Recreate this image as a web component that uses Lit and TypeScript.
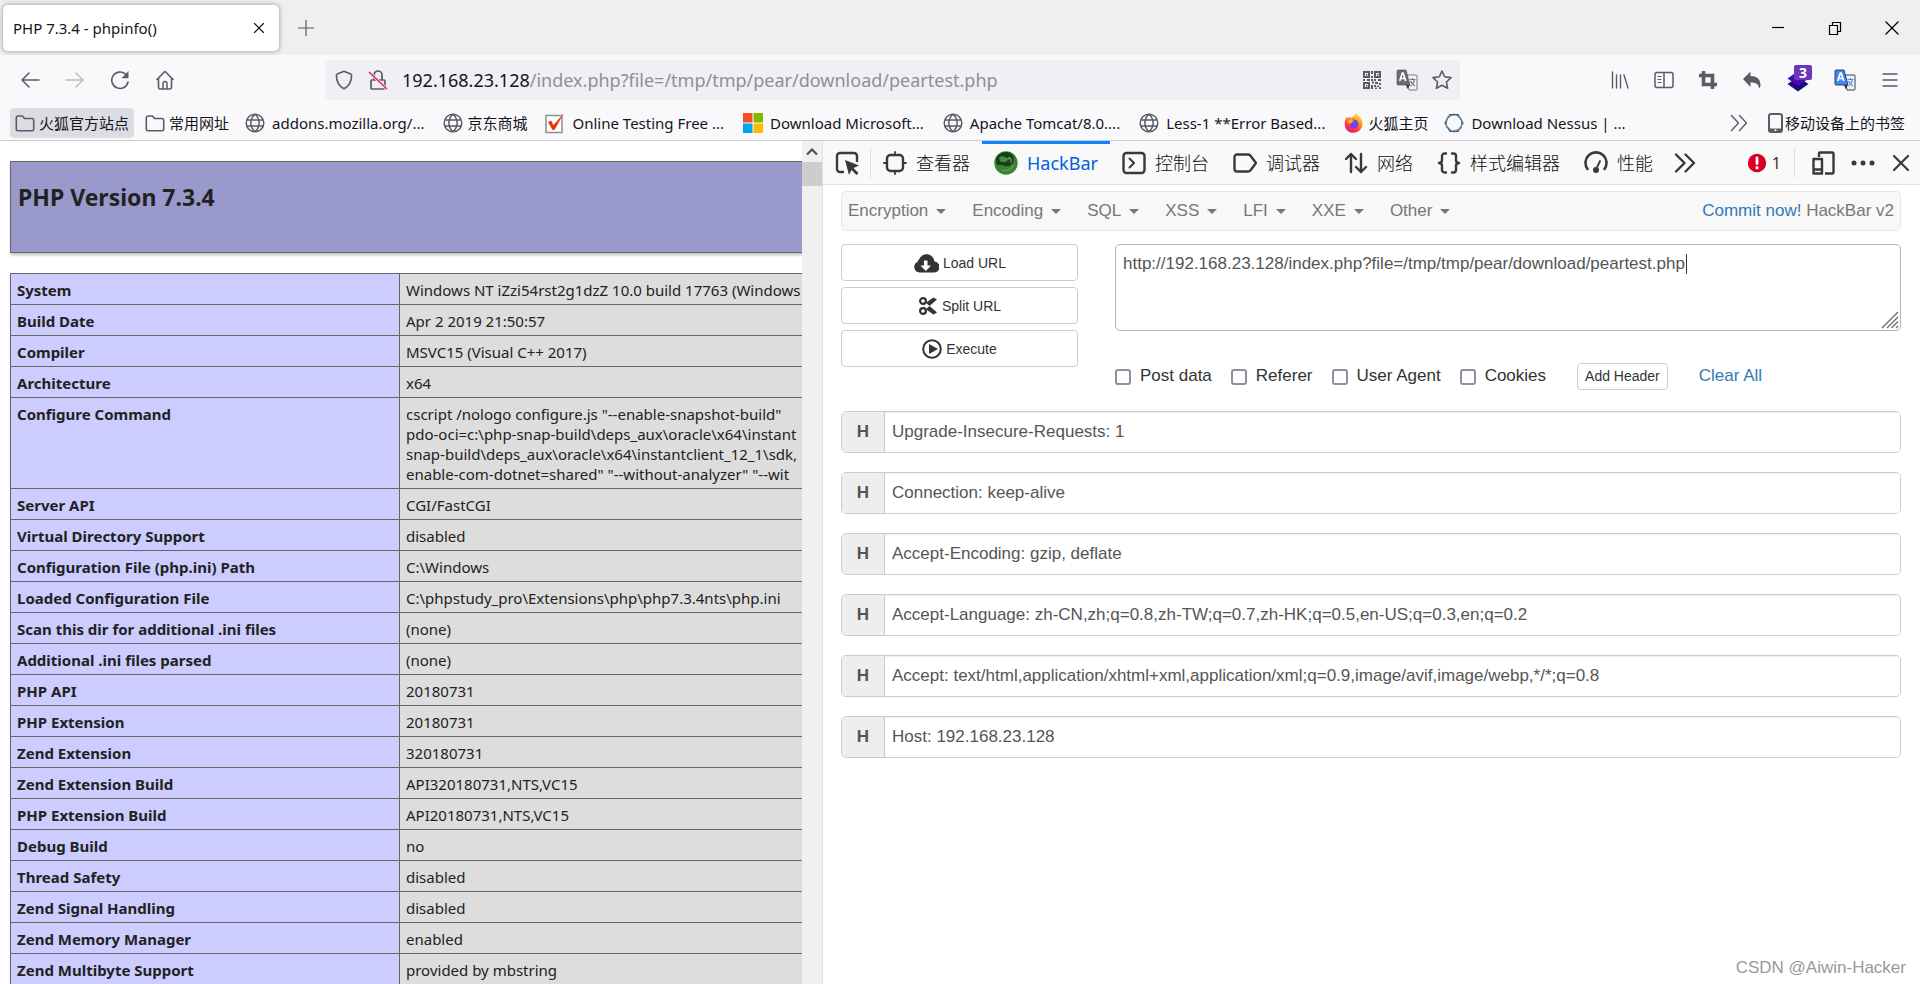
import { LitElement, html, css, svg, TemplateResult } from "lit";
import { customElement } from "lit/decorators.js";
import { classMap } from "lit/directives/class-map.js";

type Glyph = { size: number; body: TemplateResult };

const stroke = (d: string, w = 1.5) =>
  svg`<path d=${d} fill="none" stroke="currentColor" stroke-width=${w} stroke-linecap="round" stroke-linejoin="round"/>`;
const fill = (d: string) => svg`<path d=${d} fill="currentColor" fill-rule="evenodd"/>`;

const glyphs: Record<string, Glyph> = {
  close: { size: 12, body: stroke("M1.500 1.500l9 9M10.500 1.500l-9 9", 1.1) },
  plus: { size: 16, body: stroke("M8 .5v15M.5 8h15", 1.2) },
  minimize: { size: 14, body: svg`<path d="M1 6.500h12" stroke="#000" stroke-width="1.200"/>` },
  restore: { size: 14, body: svg`<path d="M1.500 4.500h8v9h-8zM4.500 4.500v-3h8v9h-3" fill="none" stroke="#000" stroke-width="1.200"/>` },
  winclose: { size: 14, body: svg`<path d="M.5.500l13 13M13.500.500l-13 13" stroke="#000" stroke-width="1.200"/>` },
  back: { size: 20, body: stroke("M19 10H2M9 3l-7 7 7 7") },
  forward: { size: 20, body: stroke("M1 10h17M11 3l7 7-7 7") },
  reload: { size: 20, body: svg`${stroke("M18 12A8.200 8.200 0 1 1 15.500 4.200", 1.6)}${fill("M18.500 1v6.500a.7.700 0 0 1-.7.700H11.500z")}` },
  home: { size: 20, body: svg`${stroke("M2 9.500L9.300 2a1 1 0 0 1 1.400 0L18 9.500M3.500 8.500V17a2 2 0 0 0 2 2h9a2 2 0 0 0 2-2V8.500", 1.6)}${stroke("M8 18.500V13.500a2 2 0 0 1 4 0v5")}` },
  shield: { size: 20, body: stroke("M10 1.300l6.800 2.600a1.200 1.200 0 0 1 .8 1.100c0 6-2 11-7.600 13.800C4.400 16 2.400 11 2.400 5a1.200 1.200 0 0 1 .8-1.100z", 1.6) },
  lock: { size: 20, body: svg`${stroke("M4 10h12a1 1 0 0 1 1 1v7a1 1 0 0 1-1 1H4a1 1 0 0 1-1-1v-7a1 1 0 0 1 1-1zM6 9V5a4 4 0 0 1 8 0v5", 1.7)}<path d="M1 2l18 17" stroke="#f0f0f4" stroke-width="3"/><path d="M1 2l18 17" stroke="#e22850" stroke-width="1.600"/>` },
  qr: {
    size: 20,
    body: svg`<path d="M2 2h5v5H2zM13 2h5v5h-5zM2 13h5v5H2z" fill="none" stroke="currentColor" stroke-width="2"/>${fill("M4 4h1.500v1.500H4zM15 4h1.500v1.500H15zM4 15h1.500v1.500H4zM9 1h2v3H9zM9 6h2v2H9zM1 9h2v2H1zM5 9h3v2H5zM9 9h2v2H9zM12 9h2v2h-2zM16 9h3v2h-3zM10 11.500h2v2h-2zM13 12h3v2h-3zM17 13h2v2h-2zM9 15h2v4H9zM12 15h2v2h-2zM15 15.500h2v1.500h-2zM13 17.500h2V19h-2zM17 17h2v2h-2z")}`,
  },
  translateGray: {
    size: 22,
    body: svg`<path d="M10 6h10a1 1 0 0 1 1 1v13a1 1 0 0 1-1 1h-7z" fill="#f4f4f4" stroke="#76767c"/><path d="M13.500 10.500h6M16.500 9V10.500M14.500 17c2.500-1.500 3.500-4 4-6.500M14.500 12c.7 2 2.500 4 4.500 5" fill="none" stroke="#76767c" stroke-width="1.200"/><path d="M2 1h8l4 15H2a1 1 0 0 1-1-1V2a1 1 0 0 1 1-1z" fill="#6b6b72" stroke="#4a4a50" stroke-width=".6"/><path d="M10 16h4l-2.500 4z" fill="#3a3a42"/><path d="M3.700 12l2.600-8h.8l2.600 8M4.700 9.500h4.400" fill="none" stroke="#fff" stroke-width="1.700"/>`,
  },
  translateBlue: {
    size: 22,
    body: svg`<path d="M10 6h10a1 1 0 0 1 1 1v13a1 1 0 0 1-1 1h-7z" fill="#f4f4f4" stroke="#3c3c44"/><path d="M13.500 10.500h6M16.500 9V10.500M14.500 17c2.500-1.500 3.500-4 4-6.500M14.500 12c.7 2 2.500 4 4.500 5" fill="none" stroke="#4a8cf5" stroke-width="1.200"/><path d="M2 1h8l4 15H2a1 1 0 0 1-1-1V2a1 1 0 0 1 1-1z" fill="#4688f1" stroke="#23355c" stroke-width=".9"/><path d="M10 16h4l-2.500 4z" fill="#2c3a5c"/><path d="M3.700 12l2.600-8h.8l2.600 8M4.700 9.500h4.400" fill="none" stroke="#fff" stroke-width="1.700"/>`,
  },
  star: { size: 20, body: stroke("M10 1l2.700 5.800 6.300.8-4.600 4.400 1.200 6.300L10 15.200l-5.600 3.100 1.200-6.300L1 7.600l6.300-.8z", 1.6) },
  library: { size: 20, body: stroke("M2.500 2v16M6.500 5v13M10.500 5v13M14 5l4 13", 1.4) },
  sidebar: { size: 20, body: svg`${stroke("M3 2.500h14a2 2 0 0 1 2 2v11a2 2 0 0 1-2 2H3a2 2 0 0 1-2-2v-11a2 2 0 0 1 2-2zM10 2.500v15")}${stroke("M4 6.500h3M4 9.500h3M4 12.500h3", 1.2)}` },
  crop: { size: 20, body: svg`<path d="M5.500 1v13.500H19M1 5.500h13.500V19" fill="none" stroke="currentColor" stroke-width="3.600"/>` },
  undo: { size: 20, body: fill("M8.500 1.500V6c6 0 10 3 10 9 0 1.200-.4 2.400-1.500 3.500-.2-4-2.500-6-8.500-6V17L1 9z") },
  cube: { size: 24, body: svg`<path d="M12 9l10.500 7L12 23.500 1.500 16z" fill="#1d0a80"/><path d="M12 3l10.500 7.500L12 18 1.500 10.500z" fill="#4b0bb0"/>` },
  menu: { size: 20, body: stroke("M3 4h14M3 10h14M3 16h14", 1.4) },
  folder: { size: 20, body: stroke("M3 3h4.500l2 2.500H17A1.700 1.700 0 0 1 18.700 7v9A1.700 1.700 0 0 1 17 17.700H3A1.700 1.700 0 0 1 1.300 16V4.700A1.700 1.700 0 0 1 3 3z", 1.6) },
  globe: { size: 20, body: stroke("M10 1.200a8.800 8.800 0 1 0 0 17.600 8.800 8.800 0 0 0 0-17.600zM10 1.200c-5.500 5-5.500 12.600 0 17.600M10 1.200c5.500 5 5.500 12.600 0 17.600M2 7h16M2 13h16", 1.5) },
  check: { size: 22, body: svg`<path d="M2 3.500h16v17H2z" fill="#fff" stroke="#8e8e93" stroke-width="1.500"/><path d="M4 10l3-1.500L9.500 13 20 1 10.500 18H8.500z" fill="#e23a0c"/>` },
  microsoft: { size: 20, body: svg`<path d="M0 0h9.500v9.500H0z" fill="#f25022"/><path d="M10.500 0H20v9.500h-9.500z" fill="#7fba00"/><path d="M0 10.500h9.500V20H0z" fill="#00a4ef"/><path d="M10.500 10.500H20V20h-9.500z" fill="#ffb900"/>` },
  firefox: {
    size: 20,
    body: svg`<defs><linearGradient id="ff" x1=".8" y1="0" x2=".3" y2="1"><stop offset="0" stop-color="#fff44f"/><stop offset=".4" stop-color="#ff980e"/><stop offset=".75" stop-color="#ff3647"/><stop offset="1" stop-color="#e31587"/></linearGradient></defs><path d="M12 0c1 2 3.500 3 5 5.500 3.500 5.500.5 14-7 14.300C4 20 .5 15.500.7 10.500.8 7 2 5.500 3 3.500l1 1.700 2-1.700.7 1.500c2-1 4-2 5.300-5z" fill="url(#ff)"/><circle cx="10" cy="11" r="4.500" fill="#7542e5"/><path d="M4 7.500c2.500-1.500 4-.5 6 .5-1 1.500-3 1-3.500 3C5 11 4 9.500 4 7.500z" fill="#ffb02e"/>`,
  },
  nessus: { size: 20, body: svg`<path d="M6 1.500h8l5 8.500-5 8.500H6L1 10z" fill="none" stroke="#2d4a6b" stroke-width="1.200"/><path d="M10 .8l7.500 5v8.400l-7.500 5-7.500-5V5.800z" fill="none" stroke="#55708c"/><path d="M4 3l9-1 5.500 6-1.500 8-9.500 2L2 12z" fill="none" stroke="#7d93a8"/>` },
  chevrons: { size: 20, body: stroke("M2.500 2.500L9.500 10l-7 7.500M10.500 2.500l7 7.500-7 7.500", 1.4) },
  phone: { size: 20, body: svg`<rect x="4" y="1" width="13" height="18" rx="2" fill="none" stroke="#5b5b66" stroke-width="2"/><path d="M4 15.500h13V19H4z" fill="#5b5b66"/><circle cx="10.500" cy="17.200" r="1" fill="#fff"/>` },
  picker: { size: 24, body: svg`${stroke("M8 21H5a3 3 0 0 1-3-3V5a3 3 0 0 1 3-3h14a3 3 0 0 1 3 3v5", 2.4)}${fill("M10 9l14 5.500-5.500 2.500 5 5-2 2-5-5L14 24z")}` },
  inspector: { size: 24, body: svg`${stroke("M7.500 4h9A3.500 3.500 0 0 1 20 7.500v9a3.500 3.500 0 0 1-3.500 3.500h-9A3.500 3.500 0 0 1 4 16.500v-9A3.500 3.500 0 0 1 7.500 4z", 2.4)}${stroke("M12 1v3M12 20v3M1 12h3M20 12h3", 1.8)}` },
  hackbar: { size: 24, body: svg`<circle cx="12" cy="12" r="11.700" fill="#3b8132"/><path d="M5 3.500C9 .5 14 0 17.500 3c3.500 2.500 3 8 0 10.500-3 2.300-6 2.500-9 .5L3.500 14C1 10 1.500 6 5 3.500z" fill="#16401a"/><path d="M5 6.500c3-2.500 6-1 8 .5l3 .5c-1 2.500-3.500 1.500-4.500 4L6 10.500" fill="#468c3c"/><path d="M14 7c3-1 4 2 2.500 4.500M8 19c5 1.500 10-1 12-5" fill="none" stroke="#65a551" stroke-width="1.300"/>` },
  console: { size: 24, body: svg`${stroke("M4.500 2h15a3 3 0 0 1 3 3v14a3 3 0 0 1-3 3h-15a3 3 0 0 1-3-3V5a3 3 0 0 1 3-3z", 2.4)}${stroke("M7.500 7.500L12 12l-4.500 4.500", 2)}` },
  debugger: { size: 24, body: stroke("M4 3.500h11a3 3 0 0 1 2.300 1L23 12l-5.700 7.500a3 3 0 0 1-2.300 1H4A2.500 2.500 0 0 1 1.500 18V6A2.500 2.500 0 0 1 4 3.500z", 2.4) },
  network: { size: 24, body: stroke("M7 21V3M2 8l5-5 5 5M17 3v18M12 16l5 5 5-5", 2.4) },
  braces: { size: 24, body: stroke("M9 2.500H7.500A2.500 2.500 0 0 0 5 5v4c0 1.800-1 3-3 3 2 0 3 1.200 3 3v4a2.500 2.500 0 0 0 2.500 2.500H9M15 2.500h1.500A2.500 2.500 0 0 1 19 5v4c0 1.800 1 3 3 3-2 0-3 1.200-3 3v4a2.500 2.500 0 0 1-2.500 2.500H15", 2.4) },
  gauge: { size: 24, body: svg`${stroke("M3.500 18A10.500 10.500 0 1 1 20.500 18", 2.6)}${stroke("M12.500 17.500L16 10", 1.8)}<circle cx="12" cy="19" r="3" fill="currentColor"/>` },
  more: { size: 24, body: stroke("M3 3.500l8.500 8.500L3 20.500M12.500 3.500L21 12l-8.500 8.500", 2.4) },
  error: { size: 20, body: svg`<circle cx="10" cy="10" r="9.200" fill="#d70022"/><path d="M10 5v5.500" stroke="#fff" stroke-width="2.800" stroke-linecap="round"/><circle cx="10" cy="14.700" r="1.600" fill="#fff"/>` },
  responsive: { size: 24, body: svg`<path d="M8 6V2.500a1 1 0 0 1 1-1h12a1.500 1.500 0 0 1 1.500 1.500v18A1.500 1.500 0 0 1 21 22.500h-7" fill="none" stroke="currentColor" stroke-width="2.400"/><path d="M2.500 8H11v14.500H2.500zM2.500 18.500H11" fill="none" stroke="currentColor" stroke-width="2.400" stroke-linejoin="round"/>` },
  dots: { size: 24, body: svg`<circle cx="3" cy="12" r="2.500" fill="currentColor"/><circle cx="12" cy="12" r="2.500" fill="currentColor"/><circle cx="21" cy="12" r="2.500" fill="currentColor"/>` },
  bigclose: { size: 20, body: stroke("M3 3l14 14M17 3L3 17", 2.2) },
  cloud: { size: 26, body: fill("M21.500 11.500A8 8 0 0 0 6 9.500 4 4 0 0 0 4.500 12 5.500 5.500 0 0 0 6.500 22.500h14a5.500 5.500 0 0 0 1-11zM11 10.500h3.500v5h3.500l-5.200 5.500-5.300-5.500H11z") },
  scissors: {
    size: 20,
    body: svg`<circle cx="5" cy="5" r="2.900" fill="none" stroke="currentColor" stroke-width="2.200"/><circle cx="5" cy="15" r="2.900" fill="none" stroke="currentColor" stroke-width="2.200"/><path d="M7 6l12 10.500-3.500 2L6 12zM7 14L19 3.500l-3.500-2L6 8z" fill="currentColor"/>`,
  },
  play: { size: 20, body: svg`<circle cx="10" cy="10" r="8.800" fill="none" stroke="currentColor" stroke-width="2"/>${fill("M7 5l9 5-9 5z")}` },
  caret: { size: 10, body: fill("M0 3h10L5 8z") },
  grip: { size: 18, body: svg`<path d="M1 17L17 1M6 17L17 6M10.500 17l6.500-6.500M15 17l2-2" stroke="#666" stroke-width="1.200"/>` },
  up: { size: 14, body: svg`<path d="M2 9.500l5-5 5 5" fill="none" stroke="#505050" stroke-width="2.200"/>` },
};

const icon = (name: string) => {
  const g = glyphs[name];
  return html`<svg width=${g.size} height=${g.size} viewBox="0 0 ${g.size} ${g.size}" aria-hidden="true">${g.body}</svg>`;
};

const reset = css`
  * { box-sizing: border-box; }
  svg { display: block; flex: none; }
  button { font: inherit; color: inherit; background: none; border: 0; padding: 0; margin: 0; }
  a { color: inherit; text-decoration: none; }
`;

@customElement("browser-chrome")
export class BrowserChrome extends LitElement {
  static styles = [reset, css`
    :host { display: block; font: 15px/20px "Noto Sans", "Noto Sans CJK SC", sans-serif; color: #15141a; }
    .tabs { display: flex; align-items: center; height: 55px; padding: 0 21px 0 3px; background: #efefef; }
    .tab { display: flex; align-items: center; justify-content: space-between; width: 276px; height: 46px; padding: 0 14px 0 10px; border-radius: 5px; background: #fff; box-shadow: 0 0 5px rgba(0,0,0,.4); }
    .new { margin-left: 19px; color: #5b5b66; }
    .window { display: flex; gap: 43px; margin-left: auto; }
    .nav { display: flex; align-items: center; height: 50px; padding: 0 20px; background: #f9f9fb; color: #5b5b66; }
    .group { display: flex; align-items: center; gap: 25px; }
    .group.right { gap: 24px; }
    .dim { color: #bcbcc2; }
    .address { display: flex; align-items: center; gap: 14px; flex: 1; height: 40px; margin: 0 150px; padding: 0 8px 0 9px; border-radius: 5px; background: #f0f0f4; }
    .tail { display: flex; align-items: center; gap: 14px; margin-left: auto; }
    .url { font-size: 18px; line-height: 24px; color: #8f8f95; white-space: nowrap; }
    .host { color: #15141a; }
    .badged { position: relative; }
    .badge { position: absolute; left: 8px; top: -3px; width: 18px; height: 15px; border-radius: 2px; background: #6b35be; color: #fff; font-size: 14px; font-weight: 700; line-height: 15px; text-align: center; }
    .marks { display: flex; align-items: center; gap: 6px; height: 36px; padding: 0 15px 0 10px; background: #f9f9fb; border-bottom: 1px solid #ccc; white-space: nowrap; }
    .mark { display: flex; align-items: center; gap: 4px; height: 30px; padding: 0 5px; border-radius: 4px; }
    .mark svg { color: #5b5b66; }
    .mark.latin { gap: 7px; padding-right: 8px; }
    .mark.open { background: #dcdce3; }
    .overflow { margin-left: auto; margin-right: 10px; color: #5b5b66; }
    .mobile { gap: 0; padding: 0; }
  `];

  private marks: [string, string, boolean][] = [
    ["folder", "火狐官方站点", false],
    ["folder", "常用网址", false],
    ["globe", "addons.mozilla.org/...", true],
    ["globe", "京东商城", false],
    ["check", "Online Testing Free ...", true],
    ["microsoft", "Download Microsoft...", true],
    ["globe", "Apache Tomcat/8.0....", true],
    ["globe", "Less-1 **Error Based...", true],
    ["firefox", "火狐主页", false],
    ["nessus", "Download Nessus | ...", true],
  ];

  render() {
    return html`
      <div class="tabs">
        <div class="tab"><span>PHP 7.3.4 - phpinfo()</span><button aria-label="Close tab">${icon("close")}</button></div>
        <button class="new" aria-label="New tab">${icon("plus")}</button>
        <div class="window">
          <button aria-label="Minimize">${icon("minimize")}</button>
          <button aria-label="Restore">${icon("restore")}</button>
          <button aria-label="Close">${icon("winclose")}</button>
        </div>
      </div>
      <div class="nav">
        <div class="group">
          <button aria-label="Back">${icon("back")}</button>
          <button class="dim" aria-label="Forward">${icon("forward")}</button>
          <button aria-label="Reload">${icon("reload")}</button>
          <button aria-label="Home">${icon("home")}</button>
        </div>
        <div class="address">
          ${icon("shield")}${icon("lock")}
          <span class="url"><span class="host">192.168.23.128</span>/index.php?file=/tmp/tmp/pear/download/peartest.php</span>
          <div class="tail">
            <button aria-label="QR code">${icon("qr")}</button>
            <button aria-label="Translate page">${icon("translateGray")}</button>
            <button aria-label="Bookmark">${icon("star")}</button>
          </div>
        </div>
        <div class="group right">
          <button aria-label="Library">${icon("library")}</button>
          <button aria-label="Sidebar">${icon("sidebar")}</button>
          <button aria-label="Screenshot">${icon("crop")}</button>
          <button aria-label="Undo">${icon("undo")}</button>
          <button class="badged" aria-label="Extensions">${icon("cube")}<span class="badge">3</span></button>
          <button aria-label="Translate">${icon("translateBlue")}</button>
          <button aria-label="Menu">${icon("menu")}</button>
        </div>
      </div>
      <nav class="marks">
        ${this.marks.map(([i, label, latin], n) => html`<a href="#" class=${classMap({ mark: true, latin, open: n === 0 })}>${icon(i)}<span>${label}</span></a>`)}
        <button class="overflow" aria-label="More bookmarks">${icon("chevrons")}</button>
        <a href="#" class="mark mobile">${icon("phone")}<span>移动设备上的书签</span></a>
      </nav>
    `;
  }
}

@customElement("php-info")
export class PhpInfo extends LitElement {
  static styles = [reset, css`
    :host { display: grid; grid-template-columns: minmax(0, 1fr) 20px; min-height: 0; background: #fff; color: #222; font: 15px/20px "Noto Sans", sans-serif; }
    .page { overflow: hidden; padding: 20px 0 0 10px; min-height: 0; }
    .head { width: 1168px; height: 92px; margin-bottom: 20px; padding: 19px 7px; border: 1px solid #666; background: #99c; box-shadow: 1px 2px 3px #bbb; }
    h1 { margin: 0; font-size: 23px; line-height: 32px; }
    table { width: 1168px; table-layout: fixed; border-collapse: collapse; box-shadow: 1px 2px 3px #ccc; }
    th, td { padding: 6px 6px 4px; border: 1px solid #666; vertical-align: top; text-align: left; line-height: 20px; }
    th { width: 389px; background: #ccf; font-weight: 700; }
    td { background: #ddd; white-space: pre; overflow: hidden; }
    .bar { background: #f0f0f0; }
    .bar button { display: grid; place-items: center; width: 20px; height: 21px; }
    .thumb { height: 24px; background: #cdcdcd; }
  `];

  private rows: [string, string][] = [
    ["System", "Windows NT iZzi54rst2g1dzZ 10.0 build 17763 (Windows"],
    ["Build Date", "Apr 2 2019 21:50:57"],
    ["Compiler", "MSVC15 (Visual C++ 2017)"],
    ["Architecture", "x64"],
    ["Configure Command", [
      'cscript /nologo configure.js "--enable-snapshot-build"',
      "pdo-oci=c:\\php-snap-build\\deps_aux\\oracle\\x64\\instant",
      "snap-build\\deps_aux\\oracle\\x64\\instantclient_12_1\\sdk,",
      'enable-com-dotnet=shared" "--without-analyzer" "--wit',
    ].join("\n")],
    ["Server API", "CGI/FastCGI"],
    ["Virtual Directory Support", "disabled"],
    ["Configuration File (php.ini) Path", "C:\\Windows"],
    ["Loaded Configuration File", "C:\\phpstudy_pro\\Extensions\\php\\php7.3.4nts\\php.ini"],
    ["Scan this dir for additional .ini files", "(none)"],
    ["Additional .ini files parsed", "(none)"],
    ["PHP API", "20180731"],
    ["PHP Extension", "20180731"],
    ["Zend Extension", "320180731"],
    ["Zend Extension Build", "API320180731,NTS,VC15"],
    ["PHP Extension Build", "API20180731,NTS,VC15"],
    ["Debug Build", "no"],
    ["Thread Safety", "disabled"],
    ["Zend Signal Handling", "disabled"],
    ["Zend Memory Manager", "enabled"],
    ["Zend Multibyte Support", "provided by mbstring"],
  ];

  render() {
    return html`
      <div class="page">
        <div class="head"><h1>PHP Version 7.3.4</h1></div>
        <table><tbody>
          ${this.rows.map(([k, v]) => html`<tr><th scope="row">${k}</th><td>${v}</td></tr>`)}
        </tbody></table>
      </div>
      <div class="bar"><button aria-label="Scroll up">${icon("up")}</button><div class="thumb"></div></div>
    `;
  }
}

@customElement("dev-tools")
export class DevTools extends LitElement {
  static styles = [reset, css`
    :host { display: block; min-width: 0; border-left: 1px solid #e0e0e2; background: #fff; color: #333; font: 17px/24px "Liberation Sans", sans-serif; }
    .bar { display: flex; align-items: center; height: 44px; padding: 0 9px 0 12px; border-bottom: 1px solid #e0e0e2; background: #f9f9fa; color: #38383d; font: 18px/24px "Noto Sans", "Noto Sans CJK SC", sans-serif; white-space: nowrap; }
    .sep { width: 1px; height: 30px; background: #e0e0e2; }
    .pick { margin-right: 11px; }
    .tab { display: flex; align-items: center; gap: 9px; height: 43px; padding: 0 12px; border-top: 3px solid transparent; border-bottom: 3px solid transparent; }
    .tab span { color: #0c0c0d; }
    .tab:not(.on) span { font-weight: 300; }
    .tab.on { border-top-color: #0a84ff; }
    .tab.on span { color: #0060df; }
    .all { margin-left: 8px; }
    .errors { display: flex; align-items: center; gap: 5px; margin-left: auto; font-size: 16px; }
    .end { display: flex; align-items: center; gap: 16px; margin-left: 13px; }
    .panel { padding: 6px 19px 0 18px; }
    .menu { display: flex; align-items: center; gap: 26px; height: 40px; padding: 0 6px; border: 1px solid #e7e7e7; border-radius: 5px; background: #f8f8f8; color: #777; white-space: nowrap; }
    .menu button { display: flex; align-items: center; gap: 8px; }
    .brand { margin-left: auto; }
    .link { color: #337ab7; }
    .form { display: grid; grid-template-columns: 237px minmax(0, 1fr); column-gap: 37px; margin-top: 13px; }
    .actions { display: flex; flex-direction: column; gap: 6px; }
    .btn { display: flex; align-items: center; justify-content: center; gap: 4px; height: 37px; border: 1px solid #ccc; border-radius: 4px; background: #fff; font-size: 14px; line-height: 20px; }
    .box { position: relative; height: 87px; }
    textarea { display: block; width: 100%; height: 100%; padding: 7px; border: 1px solid #b3b3b3; border-radius: 5px; background: #fff; color: #555; font: inherit; resize: none; outline: none; overflow: hidden; }
    .grip { position: absolute; right: 2px; bottom: 2px; }
    .cursor { position: absolute; left: 571px; top: 10px; width: 1px; height: 20px; background: #333; }
    .options { display: flex; align-items: center; gap: 19px; height: 28px; margin-top: 31px; white-space: nowrap; }
    .opt { display: flex; align-items: center; gap: 9px; }
    .opt input { appearance: none; width: 16px; height: 16px; margin: 2px 0 0; border: 2px solid #8f8f9d; border-radius: 3px; background: #fff; }
    .add { height: 27px; margin: 0 12px; padding: 0 7px; }
    .headers { display: grid; gap: 19px; margin-top: 21px; }
    .row { display: flex; height: 42px; border: 1px solid #ccc; border-radius: 5px; overflow: hidden; color: #555; }
    .row label { display: grid; place-items: center; width: 43px; background: #eee; border-right: 1px solid #ccc; font-weight: 700; }
    .row input { flex: 1; min-width: 0; padding: 0 7px; border: 0; outline: 0; background: #fff; color: #555; font: inherit; box-shadow: inset 0 1px 1px rgba(0,0,0,.075); }
  `];

  private tabs: [string, string][] = [
    ["inspector", "查看器"], ["hackbar", "HackBar"], ["console", "控制台"], ["debugger", "调试器"],
    ["network", "网络"], ["braces", "样式编辑器"], ["gauge", "性能"],
  ];
  private menus = ["Encryption", "Encoding", "SQL", "XSS", "LFI", "XXE", "Other"];
  private actions: [string, string][] = [["cloud", "Load URL"], ["scissors", "Split URL"], ["play", "Execute"]];
  private options = ["Post data", "Referer", "User Agent", "Cookies"];
  private headers = [
    "Upgrade-Insecure-Requests: 1",
    "Connection: keep-alive",
    "Accept-Encoding: gzip, deflate",
    "Accept-Language: zh-CN,zh;q=0.8,zh-TW;q=0.7,zh-HK;q=0.5,en-US;q=0.3,en;q=0.2",
    "Accept: text/html,application/xhtml+xml,application/xml;q=0.9,image/avif,image/webp,*/*;q=0.8",
    "Host: 192.168.23.128",
  ];

  render() {
    return html`
      <div class="bar">
        <button class="pick" aria-label="Pick element">${icon("picker")}</button>
        <span class="sep"></span>
        ${this.tabs.map(([i, t]) => html`<button class=${classMap({ tab: true, on: i === "hackbar" })}>${icon(i)}<span>${t}</span></button>`)}
        <button class="all" aria-label="More tools">${icon("more")}</button>
        <button class="errors">${icon("error")}<span>1</span></button>
        <div class="end">
          <span class="sep"></span>
          <button aria-label="Responsive design mode">${icon("responsive")}</button>
          <button aria-label="Options">${icon("dots")}</button>
          <button aria-label="Close tools">${icon("bigclose")}</button>
        </div>
      </div>
      <div class="panel">
        <div class="menu">
          ${this.menus.map((m) => html`<button>${m}${icon("caret")}</button>`)}
          <span class="brand"><a class="link" href="#">Commit now!</a> HackBar v2</span>
        </div>
        <div class="form">
          <div class="actions">
            ${this.actions.map(([i, t]) => html`<button class="btn">${icon(i)}${t}</button>`)}
          </div>
          <div>
            <div class="box">
              <textarea aria-label="URL" spellcheck="false" .value=${"http://192.168.23.128/index.php?file=/tmp/tmp/pear/download/peartest.php"}></textarea>
              <span class="cursor"></span>
              <span class="grip">${icon("grip")}</span>
            </div>
            <div class="options">
              ${this.options.map((o) => html`<label class="opt"><input type="checkbox">${o}</label>`)}
              <button class="btn add">Add Header</button>
              <a class="link" href="#">Clear All</a>
            </div>
          </div>
        </div>
        <div class="headers">
          ${this.headers.map((h, n) => html`<div class="row"><label for="h${n}">H</label><input id="h${n}" .value=${h}></div>`)}
        </div>
      </div>
    `;
  }
}

@customElement("app-root")
export class AppRoot extends LitElement {
  static styles = css`
    :host { display: grid; grid-template-rows: auto minmax(0, 1fr); height: 100vh; overflow: hidden; position: relative; }
    .split { display: grid; grid-template-columns: minmax(0, 822fr) minmax(0, 1098fr); min-height: 0; }
    .mark { position: absolute; right: 14px; bottom: 4px; color: #999; font: 17px/24px "Liberation Sans", sans-serif; }
  `;

  render() {
    return html`
      <browser-chrome></browser-chrome>
      <div class="split"><php-info></php-info><dev-tools></dev-tools></div>
      <span class="mark">CSDN @Aiwin-Hacker</span>
    `;
  }
}
